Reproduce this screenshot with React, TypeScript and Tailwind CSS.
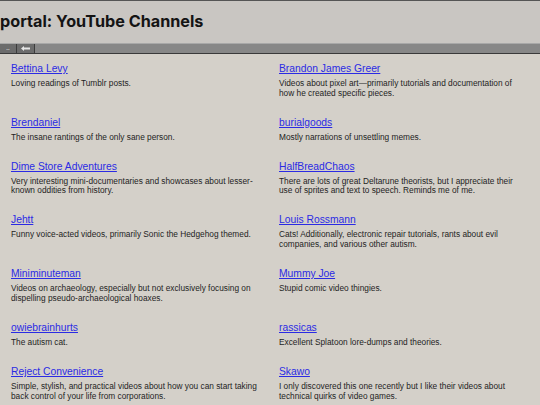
import React from "react";

type Ch = { name: string; desc: React.ReactNode };

const rows: [Ch, Ch][] = [
  [
    { name: "Bettina Levy", desc: "Loving readings of Tumblr posts." },
    { name: "Brandon James Greer", desc: "Videos about pixel art\u2014primarily tutorials and documentation of how he created specific pieces." },
  ],
  [
    { name: "Brendaniel", desc: "The insane rantings of the only sane person." },
    { name: "burialgoods", desc: "Mostly narrations of unsettling memes." },
  ],
  [
    { name: "Dime Store Adventures", desc: "Very interesting mini-documentaries and showcases about lesser-known oddities from history." },
    {
      name: "HalfBreadChaos",
      desc: (
        <>
          There are lots of great Deltarune theorists, but I appreciate their
          <br />
          use of sprites and text to speech. Reminds me of me.
        </>
      ),
    },
  ],
  [
    { name: "Jehtt", desc: "Funny voice-acted videos, primarily Sonic the Hedgehog themed." },
    { name: "Louis Rossmann", desc: "Cats! Additionally, electronic repair tutorials, rants about evil companies, and various other autism." },
  ],
  [
    { name: "Miniminuteman", desc: "Videos on archaeology, especially but not exclusively focusing on dispelling pseudo-archaeological hoaxes." },
    { name: "Mummy Joe", desc: "Stupid comic video thingies." },
  ],
  [
    { name: "owiebrainhurts", desc: "The autism cat." },
    { name: "rassicas", desc: "Excellent Splatoon lore-dumps and theories." },
  ],
  [
    { name: "Reject Convenience", desc: "Simple, stylish, and practical videos about how you can start taking back control of your life from corporations." },
    { name: "Skawo", desc: "I only discovered this one recently but I like their videos about technical quirks of video games." },
  ],
];

function Entry({ c }: { c: Ch }) {
  return (
    <div className="flex flex-col">
      <a
        href="#"
        className="text-[10.3px] leading-[14px] text-[#2b2be4] underline underline-offset-[1px] [font-family:'Liberation_Sans',Arial,sans-serif]"
      >
        {c.name}
      </a>
      <p className="mt-[3px] text-[8.3px] leading-[9.6px] text-[#1e1e1e] [font-family:'Liberation_Sans',Arial,sans-serif]">
        {c.desc}
      </p>
    </div>
  );
}

export default function App() {
  return (
    <div className="w-[540px] h-[405px] overflow-hidden bg-[#d4d0c9] flex flex-col">
      <div className="h-[43px] shrink-0 bg-[#c9c6c2] border-t border-[#555] flex items-center">
        <h1 className="text-[16.2px] font-bold text-[#141414] leading-none [font-family:Inter,'Open_Sans',sans-serif] -mt-[2px]">
          portal: YouTube Channels
        </h1>
      </div>
      <div className="h-[11px] shrink-0 bg-[#878787] border-t border-[#a8a8a8] border-b border-b-[#3a3a3a] flex">
        <div className="w-[17px] h-full bg-[#6c6c6c] border-r border-[#3c3c3c] flex items-end justify-center pb-[2px]">
          <span className="text-[6px] leading-none text-[#dddddd] font-bold [font-family:'Liberation_Sans',sans-serif]">..</span>
        </div>
        <div className="w-[18px] h-full bg-[#6c6c6c] border-r border-[#3c3c3c] flex items-center justify-center">
          <svg width="9" height="5" viewBox="0 0 9 5">
            <path d="M0 2.5 L3 0 L3 1.5 L9 1.5 L9 3.5 L3 3.5 L3 5 Z" fill="#e6e6e6" />
          </svg>
        </div>
      </div>
      <div className="pt-[8px] pl-[11px] pr-[11px] grid grid-cols-[250px_250px] gap-x-[18px] gap-y-[17.5px]">
        {rows.map((r, i) => (
          <React.Fragment key={i}>
            <Entry c={r[0]} />
            <Entry c={r[1]} />
          </React.Fragment>
        ))}
      </div>
    </div>
  );
}
